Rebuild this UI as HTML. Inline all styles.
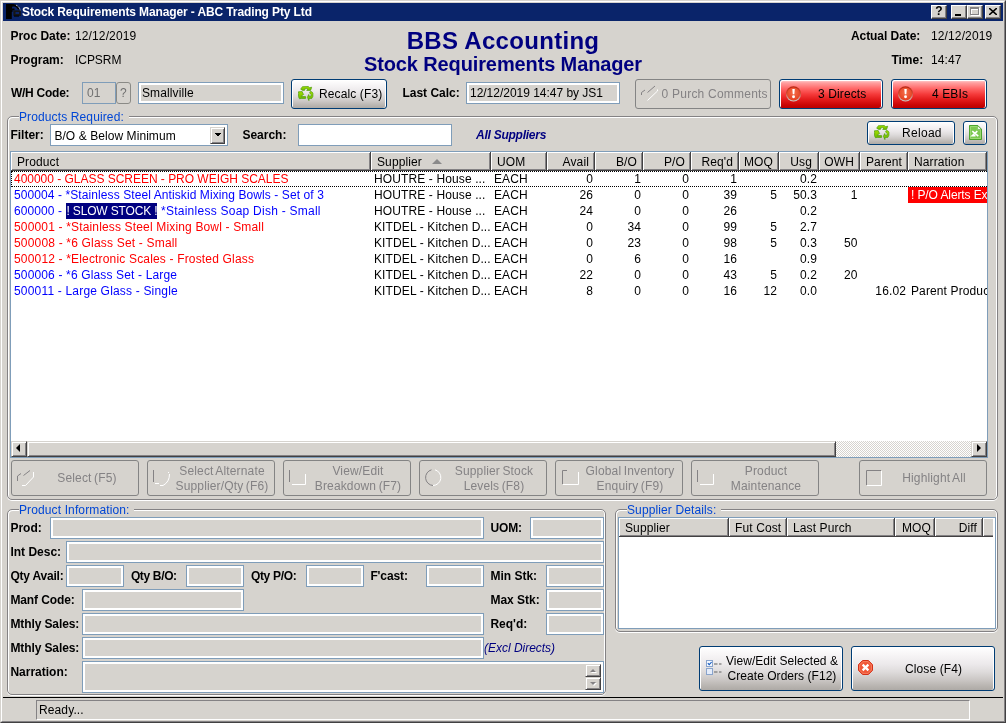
<!DOCTYPE html>
<html>
<head>
<meta charset="utf-8">
<title>Stock Requirements Manager</title>
<style>
html,body{margin:0;padding:0;}
body{width:1006px;height:723px;overflow:hidden;background:#d6d3ce;font-family:"Liberation Sans",sans-serif;font-size:12px;color:#000;position:relative;letter-spacing:0.12px;}
*{box-sizing:border-box;}
.a{position:absolute;white-space:nowrap;}
.t{position:absolute;white-space:nowrap;line-height:14px;height:14px;}
.b{font-weight:bold;letter-spacing:0;margin-left:0.4px;}
.in{position:absolute;border:1px solid #7f9db9;background:#d6d3ce;box-shadow:inset 0 0 0 2px #fff;height:22px;}
.ind{position:absolute;border:1px solid #7f9db9;background:#d6d3ce;height:22px;}
.inw{position:absolute;border:1px solid #7f9db9;background:#fff;}
.btn{position:absolute;border:1px solid #003c74;border-radius:3px;background:linear-gradient(#ffffff 0%,#f7f5f6 18%,#ece9eb 40%,#dedbdb 58%,#cbc7c5 76%,#b8b4b0 91%,#aeaaa6 100%);box-shadow:inset 1px 1px 0 #fff, inset -1px 0 0 #fff;}
.dis{position:absolute;border:1px solid #848484;border-radius:3px;background:#d6d3ce;color:#8c8a85;}
.red{position:absolute;border:1px solid #003c74;border-radius:3px;background:linear-gradient(#ffd8d8 0%,#ffa0a0 10%,#ff6464 32%,#f43838 52%,#e01818 72%,#c80404 90%,#bc0000 100%);box-shadow:inset 1px 1px 0 #fff, inset -1px 0 0 #fff;}
.gb{position:absolute;border:1px solid #848284;border-radius:5px;box-shadow:0 1px 0 #fff, inset 1px 1px 0 #fff, inset -1px 0 0 #fff;}
.lg{position:absolute;white-space:nowrap;background:#d6d3ce;color:#0046d5;line-height:14px;height:14px;padding:0 5px 0 0;}
.hd{position:absolute;top:0;height:19px;background:#d6d3ce;border-right:1px solid #424142;border-bottom:1px solid #424142;box-shadow:inset 1px 1px 0 #fff, inset -1px -1px 0 #848284;line-height:16px;padding:2px 0 0 6px;white-space:nowrap;overflow:hidden;}
.hd.num{padding:2px 5px 0 0;}
.r{position:absolute;left:0;height:16px;width:976px;line-height:16px;white-space:nowrap;}
.r span{position:absolute;top:0;height:16px;overflow:hidden;white-space:nowrap;}
.c1{left:3px;width:356px;}.c2{left:363px;width:116px;}.c3{left:483px;width:52px;}
.c4{left:536px;width:46px;text-align:right;}.c5{left:584px;width:46px;text-align:right;}.c6{left:632px;width:46px;text-align:right;}.c7{left:680px;width:46px;text-align:right;}.c8{left:728px;width:38px;text-align:right;}.c9{left:768px;width:38px;text-align:right;}.c10{left:808.5px;width:38px;text-align:right;}.c11{left:849px;width:46px;text-align:right;}.c12{left:900px;width:76px;}
.red-t{color:#ff0000;}
.blu-t{color:#0000ff;}
.num{text-align:right;}
.cb{width:16px;height:14px;background:#d6d3ce;border:1px solid #fff;border-right-color:#424142;border-bottom-color:#424142;box-shadow:inset -1px -1px 0 #848284;}
.sb{background:#d6d3ce;border:1px solid #d6d3ce;border-right-color:#424142;border-bottom-color:#424142;box-shadow:inset 1px 1px 0 #fff, inset -1px -1px 0 #848284;}
.dt{position:absolute;white-space:nowrap;line-height:15px;color:#848284;text-align:center;letter-spacing:0.15px;word-spacing:-1px;margin-top:1px;}
.sl{font-style:normal;background:#000080;color:#fff;padding:0;display:inline-block;height:16px;letter-spacing:-0.16px;width:91px;overflow:hidden;vertical-align:top;margin-left:1px;}
</style>
</head>
<body>
<div id="w" style="position:absolute;left:0;top:0;width:1006px;height:723px;will-change:transform;">
<svg width="0" height="0" style="position:absolute">
<defs>
<linearGradient id="gg" x1="0" y1="0" x2="0" y2="1"><stop offset="0" stop-color="#a4e000"/><stop offset="1" stop-color="#6cb800"/></linearGradient>
<radialGradient id="ag" cx="0.5" cy="0.4" r="0.6"><stop offset="0" stop-color="#f4704c"/><stop offset="1" stop-color="#e44020"/></radialGradient>
<linearGradient id="ar" x1="0" y1="0" x2="0" y2="1"><stop offset="0" stop-color="#b82410"/><stop offset="0.45" stop-color="#d04830"/><stop offset="0.7" stop-color="#d09088"/><stop offset="1" stop-color="#c4d0d0"/></linearGradient>
</defs>
</svg>
<!-- window frame -->
<div class="a" style="left:0;top:0;width:1006px;height:723px;border:1px solid #d6d3ce;border-right-color:#424142;border-bottom-color:#424142;"></div>
<div class="a" style="left:1px;top:1px;width:1004px;height:721px;border:1px solid #fff;border-right-color:#848284;border-bottom-color:#848284;"></div>
<!-- title bar -->
<div class="a" id="tb" style="left:3px;top:3px;width:1000px;height:18px;background:#0a246a;"></div>
<svg class="a" style="left:4px;top:3px;" width="18" height="18" viewBox="0 0 18 18">
<path d="M2,1 H9.500 L12.500,2 L14.500,4 L15.500,6.500 H14 L12.500,4.500 L10.500,3.500 H8.500 L8,4.500 V5.500 H10.500 V7.300 H8.500 V9 H7.800 V16 H2 Z" fill="#000"/>
<path d="M12,2.2 Q15.5,3.5 16.3,7.5" stroke="#e8e8e8" stroke-width="1" fill="none" stroke-dasharray="1 0.6"/>
<rect x="9.4" y="7.4" width="7.4" height="5.6" fill="#151515"/>
<rect x="11.5" y="9" width="3.6" height="2" fill="#0a246a"/>
<rect x="10" y="12.6" width="5" height="1" fill="#000"/>
</svg>
<!-- caption buttons -->
<div class="a cb" style="left:931px;top:5px;"></div>
<div class="a cb" style="left:951px;top:5px;"></div>
<div class="a cb" style="left:967px;top:5px;"></div>
<div class="a cb" style="left:985px;top:5px;"></div>
<div class="a" style="left:935px;top:4px;width:8px;font-weight:bold;font-size:12px;line-height:14px;text-align:center;">?</div>
<div class="a" style="left:955px;top:14px;width:6px;height:2px;background:#000;"></div>
<div class="a" style="left:971px;top:8px;width:9px;height:8px;border:1px solid #fff;border-top-width:2px;"></div>
<div class="a" style="left:970px;top:7px;width:9px;height:8px;border:1px solid #848284;border-top-width:2px;"></div>
<svg class="a" style="left:989px;top:8px;" width="8" height="7" viewBox="0 0 8 7"><path d="M0,0 L8,7 M8,0 L0,7" stroke="#000" stroke-width="1.6" fill="none"/></svg>
<div class="t" id="title" style="left:22px;top:5px;color:#fff;font-weight:bold;font-size:12px;letter-spacing:-0.12px;">Stock Requirements Manager - ABC Trading Pty Ltd</div>

<!-- top labels -->
<div class="t b" style="left:10px;top:29px;">Proc Date:</div>
<div class="t" style="left:75px;top:29px;">12/12/2019</div>
<div class="t b" style="left:10px;top:53px;">Program:</div>
<div class="t" style="left:75px;top:53px;letter-spacing:-0.05px;">ICPSRM</div>
<div class="t b" style="left:850.5px;top:29px;letter-spacing:-0.05px;">Actual Date:</div>
<div class="t" style="left:931px;top:29px;">12/12/2019</div>
<div class="t b" style="left:891px;top:53px;">Time:</div>
<div class="t" style="left:931px;top:53px;">14:47</div>

<div class="a" id="h1" style="left:0;top:26px;width:1006px;text-align:center;font-weight:bold;font-size:24px;line-height:30px;color:#000080;letter-spacing:0.3px;">BBS Accounting</div>
<div class="a" id="h2" style="left:0;top:52px;width:1006px;text-align:center;font-weight:bold;font-size:20px;line-height:24px;color:#000080;letter-spacing:-0.12px;">Stock Requirements Manager</div>


<!-- W/H row -->
<div class="t b" style="left:10.5px;top:86px;letter-spacing:-0.25px;">W/H Code:</div>
<div class="ind" style="left:82px;top:82px;width:34px;"></div>
<div class="t" style="left:87px;top:86px;color:#707070;">01</div>
<div class="a" style="left:116px;top:82px;width:15px;height:22px;border:1px solid #8a8a86;border-radius:3px;"></div>
<div class="t" style="left:120px;top:86px;color:#707070;">?</div>
<div class="in" style="left:138px;top:82px;width:146px;"></div>
<div class="t" style="left:142px;top:86px;">Smallville</div>
<div class="btn" style="left:291px;top:79px;width:96px;height:30px;"></div>
<div class="t" style="left:319px;top:87px;">Recalc (F3)</div>
<div class="t b" style="left:402px;top:86px;">Last Calc:</div>
<div class="in" style="left:466px;top:82px;width:154px;"></div>
<div class="t" style="left:470px;top:86px;letter-spacing:-0.02px;">12/12/2019 14:47 by JS1</div>
<div class="dis" style="left:635px;top:79px;width:136px;height:30px;"></div>
<div class="t" style="left:661.6px;top:87px;color:#848284;letter-spacing:0.22px;">0 Purch Comments</div>
<div class="red" style="left:779px;top:79px;width:104px;height:30px;"></div>
<div class="t" style="left:818px;top:87px;">3 Directs</div>
<div class="red" style="left:891px;top:79px;width:96px;height:30px;"></div>
<div class="t" style="left:932px;top:87px;">4 EBIs</div>

<!-- Products Required group -->
<div class="gb" style="left:7px;top:116px;width:991px;height:384px;"></div>
<div class="lg" style="left:19px;top:110px;">Products Required:</div>
<div class="t b" style="left:10px;top:128px;">Filter:</div>
<div class="inw" style="left:50px;top:124px;width:178px;height:22px;"></div>
<div class="t" style="left:54.4px;top:129px;letter-spacing:0.07px;">B/O &amp; Below Minimum</div>
<div class="a sb" style="left:210px;top:127px;width:15px;height:17px;"></div>
<svg class="a" style="left:214px;top:133px;" width="7" height="4"><path d="M0,0 H7 L3.5,3.500 Z" fill="#000" shape-rendering="crispEdges"/></svg>
<div class="t b" style="left:242px;top:128px;">Search:</div>
<div class="inw" style="left:298px;top:124px;width:154px;height:22px;"></div>
<div class="t" style="left:476px;top:128px;color:#000080;font-weight:bold;font-style:italic;letter-spacing:-0.25px;">All Suppliers</div>
<div class="btn" style="left:867px;top:121px;width:88px;height:24px;"></div>
<div class="t" style="left:902px;top:126px;letter-spacing:0.3px;">Reload</div>
<div class="btn" style="left:963px;top:121px;width:24px;height:24px;"></div>

<!-- main grid -->
<div class="a" id="grid" style="left:10px;top:151px;width:978px;height:307px;border:1px solid #7f9db9;background:#fff;overflow:hidden;">
<div class="hd" style="left:0;width:360px;">Product</div>
<div class="hd" style="left:360px;width:120px;">Supplier<i style="position:absolute;left:61px;top:7px;width:0;height:0;border:5px solid transparent;border-top:0;border-bottom:5px solid #8a8a8a;"></i></div>
<div class="hd" style="left:480px;width:56px;">UOM</div>
<div class="hd num" style="left:536px;width:48px;">Avail</div>
<div class="hd num" style="left:584px;width:48px;">B/O</div>
<div class="hd num" style="left:632px;width:48px;">P/O</div>
<div class="hd num" style="left:680px;width:48px;">Req'd</div>
<div class="hd num" style="left:728px;width:40px;">MOQ</div>
<div class="hd num" style="left:768px;width:40px;padding-right:6px;">Usg</div>
<div class="hd num" style="left:808px;width:41px;">OWH</div>
<div class="hd" style="left:849px;width:48px;">Parent</div>
<div class="hd" style="left:897px;width:79px;">Narration</div>
<div class="r" style="top:19px;"><span class="c1 red-t" style="letter-spacing:-0.025px;">400000 - GLASS SCREEN - PRO WEIGH SCALES</span><span class="c2">HOUTRE - House ...</span><span class="c3">EACH</span><span class="c4">0</span><span class="c5">1</span><span class="c6">0</span><span class="c7">1</span><span class="c9">0.2</span></div>
<div class="r" style="top:35px;"><span class="c1 blu-t" style="letter-spacing:0.088px;">500004 - *Stainless Steel Antiskid Mixing Bowls - Set of 3</span><span class="c2">HOUTRE - House ...</span><span class="c3">EACH</span><span class="c4">26</span><span class="c5">0</span><span class="c6">0</span><span class="c7">39</span><span class="c8">5</span><span class="c9">50.3</span><span class="c10">1</span><span class="c12" style="left:897px;width:79px;background:#ff0000;color:#fff;padding-left:3px;letter-spacing:-0.1px;">! P/O Alerts Ex</span></div>
<div class="r" style="top:51px;"><span class="c1 blu-t" style="letter-spacing:0.08px;">600000 - <i class="sl">! SLOW STOCK !</i><b style="font-weight:normal;letter-spacing:0.25px;"> *Stainless Soap Dish - Small</b></span><span class="c2">HOUTRE - House ...</span><span class="c3">EACH</span><span class="c4">24</span><span class="c5">0</span><span class="c6">0</span><span class="c7">26</span><span class="c9">0.2</span></div>
<div class="r" style="top:67px;"><span class="c1 red-t" style="letter-spacing:0.16px;">500001 - *Stainless Steel Mixing Bowl - Small</span><span class="c2">KITDEL - Kitchen D...</span><span class="c3">EACH</span><span class="c4">0</span><span class="c5">34</span><span class="c6">0</span><span class="c7">99</span><span class="c8">5</span><span class="c9">2.7</span></div>
<div class="r" style="top:83px;"><span class="c1 red-t" style="letter-spacing:0.185px;">500008 - *6 Glass Set - Small</span><span class="c2">KITDEL - Kitchen D...</span><span class="c3">EACH</span><span class="c4">0</span><span class="c5">23</span><span class="c6">0</span><span class="c7">98</span><span class="c8">5</span><span class="c9">0.3</span><span class="c10">50</span></div>
<div class="r" style="top:99px;"><span class="c1 red-t" style="letter-spacing:0.17px;">500012 - *Electronic Scales - Frosted Glass</span><span class="c2">KITDEL - Kitchen D...</span><span class="c3">EACH</span><span class="c4">0</span><span class="c5">6</span><span class="c6">0</span><span class="c7">16</span><span class="c9">0.9</span></div>
<div class="r" style="top:115px;"><span class="c1 blu-t" style="letter-spacing:0.15px;">500006 - *6 Glass Set - Large</span><span class="c2">KITDEL - Kitchen D...</span><span class="c3">EACH</span><span class="c4">22</span><span class="c5">0</span><span class="c6">0</span><span class="c7">43</span><span class="c8">5</span><span class="c9">0.2</span><span class="c10">20</span></div>
<div class="r" style="top:131px;"><span class="c1 blu-t" style="letter-spacing:0.185px;">500011 - Large Glass - Single</span><span class="c2">KITDEL - Kitchen D...</span><span class="c3">EACH</span><span class="c4">8</span><span class="c5">0</span><span class="c6">0</span><span class="c7">16</span><span class="c8">12</span><span class="c9">0.0</span><span class="c11">16.02</span><span class="c12">Parent Produc</span></div>
<div class="a" style="left:0;top:19px;width:980px;height:16px;border:1px dotted #000;"></div>
<div class="a" style="left:0;top:289px;width:976px;height:16px;background:#d6d3ce;"></div>
<div class="a sb" style="left:0;top:289px;width:16px;height:16px;"></div>
<div class="a sb" style="left:16px;top:289px;width:809px;height:16px;"></div>
<div class="a" style="left:825px;top:289px;width:135px;height:16px;background-color:#fff;background-image:conic-gradient(#d6d3ce 25%,#fff 0 50%,#d6d3ce 0 75%,#fff 0);background-size:2px 2px;"></div>
<div class="a sb" style="left:960px;top:289px;width:16px;height:16px;"></div>
<div class="a" style="left:5px;top:292px;width:0;height:0;border:4px solid transparent;border-right:4px solid #000;border-left:0;"></div>
<div class="a" style="left:966px;top:292px;width:0;height:0;border:4px solid transparent;border-left:4px solid #000;border-right:0;"></div>

</div>

<!-- disabled action buttons -->
<div class="dis" style="left:11px;top:460px;width:128px;height:36px;"></div>
<div class="dt" style="left:37px;top:470px;width:100px;">Select (F5)</div>
<div class="dis" style="left:147px;top:460px;width:128px;height:36px;"></div>
<div class="dt" style="left:171px;top:463px;width:102px;">Select Alternate<br>Supplier/Qty (F6)</div>
<div class="dis" style="left:283px;top:460px;width:128px;height:36px;"></div>
<div class="dt" style="left:307px;top:463px;width:102px;">View/Edit<br>Breakdown (F7)</div>
<div class="dis" style="left:419px;top:460px;width:128px;height:36px;"></div>
<div class="dt" style="left:443px;top:463px;width:102px;">Supplier Stock<br>Levels (F8)</div>
<div class="dis" style="left:555px;top:460px;width:128px;height:36px;"></div>
<div class="dt" style="left:579px;top:463px;width:102px;">Global Inventory<br>Enquiry (F9)</div>
<div class="dis" style="left:691px;top:460px;width:128px;height:36px;"></div>
<div class="dt" style="left:715px;top:463px;width:102px;">Product<br>Maintenance</div>
<div class="dis" style="left:859px;top:460px;width:128px;height:36px;"></div>
<div class="dt" style="left:883px;top:470px;width:102px;">Highlight All</div>

<!-- Product Information -->
<div class="gb" style="left:7px;top:509px;width:599px;height:186px;"></div>
<div class="lg" style="left:19px;top:503px;">Product Information:</div>
<div class="t b" style="left:10px;top:521px;">Prod:</div>
<div class="in" style="left:50px;top:517px;width:434px;"></div>
<div class="t b" style="left:490px;top:521px;letter-spacing:-0.1px;">UOM:</div>
<div class="in" style="left:530px;top:517px;width:74px;"></div>
<div class="t b" style="left:10px;top:545px;">Int Desc:</div>
<div class="in" style="left:66px;top:541px;width:538px;"></div>
<div class="t b" style="left:10px;top:569px;letter-spacing:-0.2px;">Qty Avail:</div>
<div class="in" style="left:66px;top:565px;width:58px;"></div>
<div class="t b" style="left:130.5px;top:569px;letter-spacing:-0.35px;">Qty B/O:</div>
<div class="in" style="left:186px;top:565px;width:58px;"></div>
<div class="t b" style="left:250.5px;top:569px;letter-spacing:-0.3px;">Qty P/O:</div>
<div class="in" style="left:306px;top:565px;width:58px;"></div>
<div class="t b" style="left:370px;top:569px;letter-spacing:-0.1px;">F'cast:</div>
<div class="in" style="left:426px;top:565px;width:58px;"></div>
<div class="t b" style="left:490px;top:569px;">Min Stk:</div>
<div class="in" style="left:546px;top:565px;width:58px;"></div>
<div class="t b" style="left:10px;top:593px;letter-spacing:-0.1px;">Manf Code:</div>
<div class="in" style="left:82px;top:589px;width:162px;"></div>
<div class="t b" style="left:490px;top:593px;">Max Stk:</div>
<div class="in" style="left:546px;top:589px;width:58px;"></div>
<div class="t b" style="left:10px;top:617px;letter-spacing:-0.1px;">Mthly Sales:</div>
<div class="in" style="left:82px;top:613px;width:402px;"></div>
<div class="t b" style="left:490px;top:617px;">Req'd:</div>
<div class="in" style="left:546px;top:613px;width:58px;"></div>
<div class="t b" style="left:10px;top:641px;letter-spacing:-0.1px;">Mthly Sales:</div>
<div class="in" style="left:82px;top:637px;width:402px;"></div>
<div class="t" style="left:484px;top:641px;color:#000080;font-style:italic;letter-spacing:-0.02px;">(Excl Directs)</div>
<div class="t b" style="left:10px;top:665px;">Narration:</div>
<div class="in" style="left:82px;top:661px;width:522px;height:32px;"></div>
<div class="a sb" style="left:585px;top:664px;width:16px;height:13px;"></div>
<div class="a sb" style="left:585px;top:677px;width:16px;height:13px;"></div>
<svg class="a" style="left:585px;top:664px;" width="16" height="26"><path d="M6,9 L9,6 L12,9 Z" fill="#fff"/><path d="M5,8 L8,5 L11,8 Z" fill="#848284"/><path d="M6,19 L12,19 L9,22 Z" fill="#fff"/><path d="M5,18 L11,18 L8,21 Z" fill="#848284"/></svg>

<!-- Supplier Details -->
<div class="gb" style="left:615px;top:509px;width:383px;height:123px;"></div>
<div class="lg" style="left:627px;top:503px;">Supplier Details:</div>
<div class="a" id="sgrid" style="left:618px;top:517px;width:378px;height:112px;border:1px solid #7f9db9;background:#fff;overflow:hidden;">
<div class="hd" style="left:0;width:110px;">Supplier</div>
<div class="hd" style="left:110px;width:58px;">Fut Cost</div>
<div class="hd" style="left:168px;width:108px;">Last Purch</div>
<div class="hd" style="left:276px;width:40px;padding-left:7px;">MOQ</div>
<div class="hd num" style="left:316px;width:48px;">Diff</div>
<div class="hd" style="left:364px;width:10px;border-right:0;box-shadow:inset 1px 1px 0 #fff, inset 0 -1px 0 #848284;"></div>
</div>

<!-- bottom buttons -->
<div class="btn" style="left:699px;top:646px;width:144px;height:45px;"></div>
<div class="t" style="left:721px;top:654px;width:122px;text-align:center;line-height:15px;height:30px;letter-spacing:0.04px;">View/Edit Selected &amp;<br>Create Orders (F12)</div>
<div class="btn" style="left:851px;top:646px;width:144px;height:45px;"></div>
<div class="t" style="left:905px;top:662px;">Close (F4)</div>


<!-- icons -->
<svg class="a" style="left:298px;top:86px;" width="16" height="16" viewBox="0 0 16 16"><g fill="url(#gg)" stroke="#4c9c0a" stroke-width="0.7" stroke-linejoin="round">
<path d="M2.700,3.200 L4.400,0.700 L10.400,0.500 L11.500,1.700 L13.700,1.200 L12.600,4.400 L8.700,4.400 L9.700,3.200 L8.700,2.600 L7.200,2.600 L6.600,4.300 L4.800,4.400 Z"/>
<path d="M0.400,5.800 L4.200,5.600 L4.800,7.200 L5.700,8.300 L4.600,9.200 L3.300,9.900 L3.300,10.600 L7.600,10.600 L7.600,12.400 L3.200,12.400 L1.500,12.800 L0.400,10.600 L0.600,7.400 Z"/>
<path d="M12,5.700 L13.900,5.800 L14.900,7.200 L14.900,10.300 L13.800,12.400 L11.200,12.400 L10.900,14.600 L9.400,11.300 L10.700,8.500 L11,10.200 L13,10.200 L13.300,8.700 L12.300,7.800 L11.600,6.800 Z"/>
</g></svg>
<svg class="a" style="left:874px;top:125px;" width="16" height="16" viewBox="0 0 16 16"><g fill="url(#gg)" stroke="#4c9c0a" stroke-width="0.7" stroke-linejoin="round">
<path d="M2.700,3.200 L4.400,0.700 L10.400,0.500 L11.500,1.700 L13.700,1.200 L12.600,4.400 L8.700,4.400 L9.700,3.200 L8.700,2.600 L7.200,2.600 L6.600,4.300 L4.800,4.400 Z"/>
<path d="M0.400,5.800 L4.200,5.600 L4.800,7.200 L5.700,8.300 L4.600,9.200 L3.300,9.900 L3.300,10.600 L7.600,10.600 L7.600,12.400 L3.200,12.400 L1.500,12.800 L0.400,10.600 L0.600,7.400 Z"/>
<path d="M12,5.700 L13.900,5.800 L14.900,7.200 L14.900,10.300 L13.800,12.400 L11.200,12.400 L10.900,14.600 L9.400,11.300 L10.700,8.500 L11,10.200 L13,10.200 L13.300,8.700 L12.300,7.800 L11.600,6.800 Z"/>
</g></svg>
<svg class="a" style="left:786px;top:86px;" width="16" height="16" viewBox="0 0 16 16"><circle cx="7.5" cy="7.9" r="7.6" fill="url(#ar)"/>
<circle cx="7.5" cy="7.9" r="6.5" fill="url(#ag)"/>
<path d="M6.300,3 H8.800 L8.300,8.300 H6.800 Z" fill="#fff"/>
<circle cx="7.550" cy="10.700" r="1.450" fill="#fff"/></svg>
<svg class="a" style="left:898px;top:86px;" width="16" height="16" viewBox="0 0 16 16"><circle cx="7.5" cy="7.9" r="7.6" fill="url(#ar)"/>
<circle cx="7.5" cy="7.9" r="6.5" fill="url(#ag)"/>
<path d="M6.300,3 H8.800 L8.300,8.300 H6.800 Z" fill="#fff"/>
<circle cx="7.550" cy="10.700" r="1.450" fill="#fff"/></svg>
<svg class="a" style="left:969px;top:125px;" width="13" height="15" viewBox="0 0 14 16"><path d="M0.5,0.5 H9.5 L13.5,4.5 V15.5 H0.5 Z" fill="#7cc850" stroke="#3c9a1c" stroke-width="1"/>
<path d="M1.5,1.5 H9 V5 H12.5 V14.5 H1.5 Z" fill="none" stroke="#a0dc78" stroke-width="1"/>
<path d="M9.300,0.700 L13.300,4.700 H9.300 Z" fill="#fff" stroke="#3c9a1c" stroke-width="0.5"/>
<path d="M3.5,6.5 L10,12 M9,6.5 L3.5,11.5 H7" stroke="#fff" stroke-width="1.7" fill="none"/></svg>
<svg class="a" style="left:858px;top:660px;" width="16" height="16" viewBox="0 0 16 16"><path d="M4.6,0.5 H10.4 L14.5,4.6 V10.4 L10.4,14.5 H4.6 L0.5,10.4 V4.6 Z" fill="#f05838" stroke="#d43018" stroke-width="1"/>
<path d="M5,1.6 H10 L13.4,5 V10 L10,13.4 H5 L1.6,10 V5 Z" fill="none" stroke="#f88868" stroke-width="0.8"/>
<path d="M4.6,4.6 L10.4,10.4 M10.4,4.6 L4.6,10.4" stroke="#fff" stroke-width="2.2" fill="none"/></svg>
<svg class="a" style="left:706px;top:660px;" width="16" height="16" viewBox="0 0 16 16"><rect x="0.5" y="0.5" width="6" height="6" fill="#f4f8ff" stroke="#8aa4cc"/>
<rect x="0.5" y="8.5" width="6" height="6" fill="#e4ecfa" stroke="#8aa4cc"/>
<path d="M1.8,3.2 L3.2,4.6 L5.6,2" stroke="#1058c0" stroke-width="1.1" fill="none"/>
<path d="M8,4 H11.5 M13,4 H15.5 M8,12 H11.5 M13,12 H15.5" stroke="#8c8c8c" stroke-width="1.4"/></svg>
<!-- disabled glyphs -->
<svg class="a" style="left:0;top:0;pointer-events:none;" width="1006" height="723" fill="none" stroke-width="1">
<g stroke="#848284">
<path d="M17.5,481 V476 L21,473.5 M23.5,475.5 L30,470.5"/>
<path d="M153.500,470 V482"/>
<path d="M289.500,470 V482"/>
<path d="M431.500,469.800 A8,8 0 0 0 433,485.500"/>
<path d="M562.500,484 V470.500 H567"/>
<path d="M697.500,470 V482"/>
<path d="M866.500,485 V470.500 H881"/>
<path d="M641.500,95 V92.500 L645,90 M647.500,92.500 L655,86"/>
</g>
<g stroke="#ffffff">
<path d="M33.500,472 V477 L25.500,485.500 H22"/>
<path d="M155,483.500 H159 M160,485.500 H163 Q169.500,482 169.500,474 M168.500,472 V473"/>
<path d="M292,484.500 H305.500 V474"/>
<path d="M435,469.800 A8,8 0 0 1 433,485.500"/>
<path d="M563,484.500 H578.500 V472"/>
<path d="M700,484.500 H713.500 V474"/>
<path d="M867,485.500 H881.500 V471"/>
<path d="M647.500,100.500 L657.500,91 V89.500"/>
</g>
</svg>

<!-- status bar -->
<div class="a" style="left:3px;top:697px;width:1000px;height:1px;background:#000;"></div>
<div class="a" style="left:36px;top:700px;width:934px;height:20px;border:1px solid #848284;border-right-color:#fff;border-bottom-color:#fff;"></div>
<div class="t" style="left:39px;top:703px;">Ready...</div>

</div>
</body>
</html>
